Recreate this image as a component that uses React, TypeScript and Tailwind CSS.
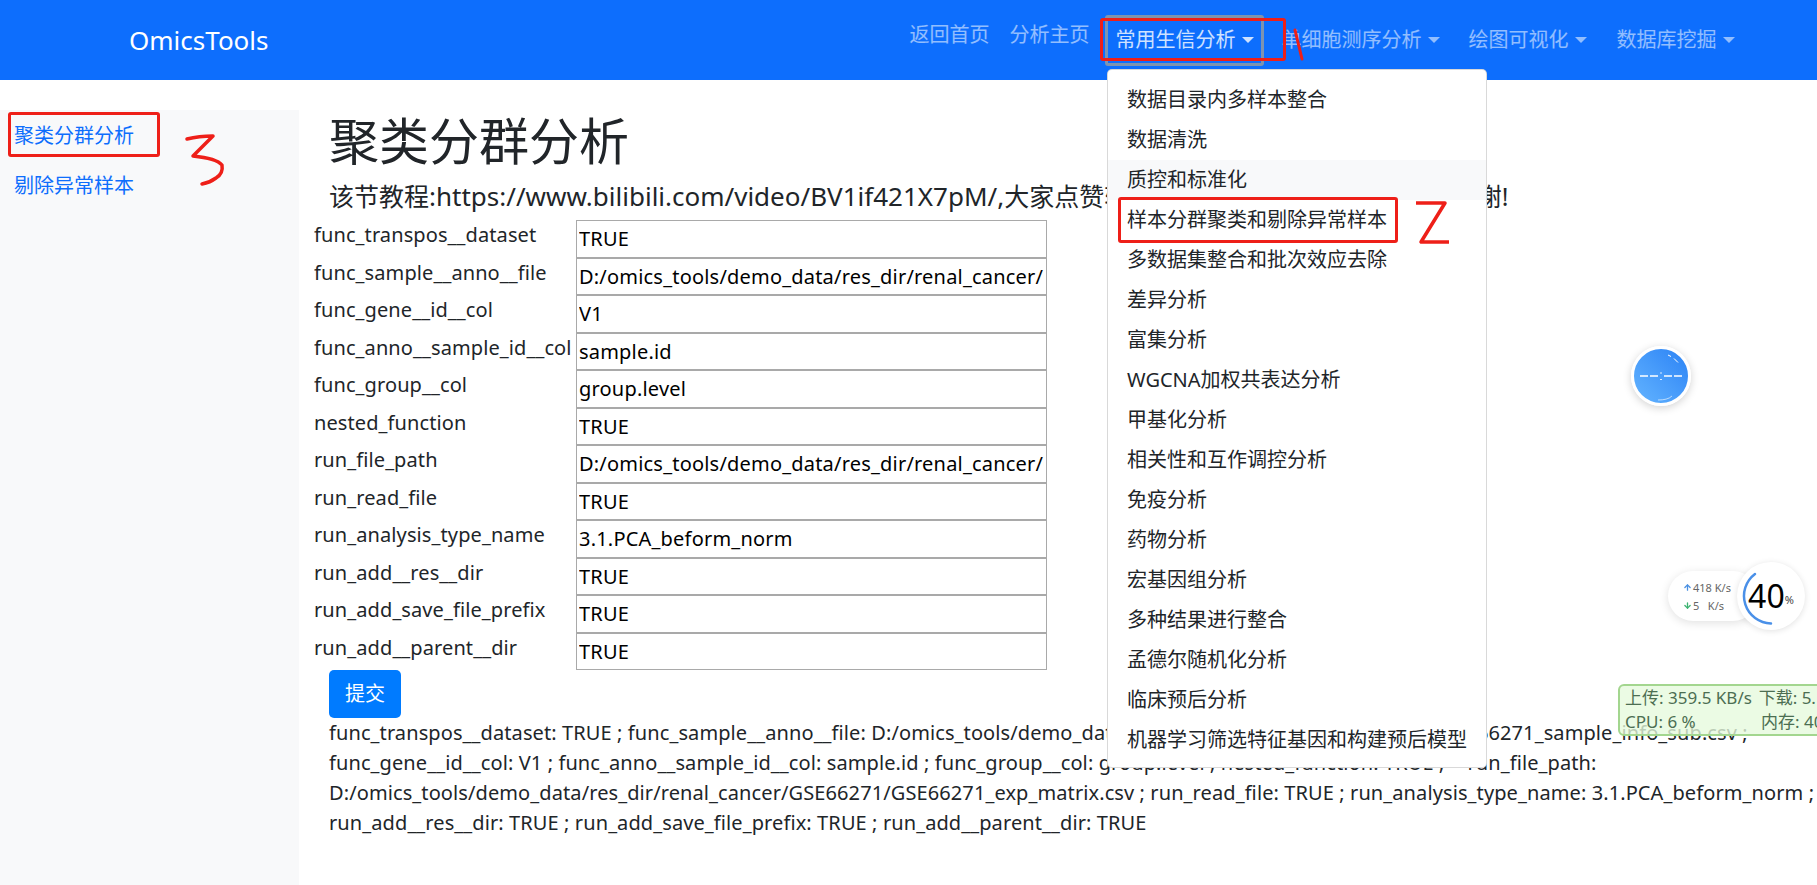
import { ArrowDown, ArrowUp } from 'lucide-react';

const FIELDS = [
  ['func_transpos__dataset', 'TRUE'],
  ['func_sample__anno__file', 'D:/omics_tools/demo_data/res_dir/renal_cancer/GSE66271/GSE66271_sample_info_sub.csv'],
  ['func_gene__id__col', 'V1'],
  ['func_anno__sample_id__col', 'sample.id'],
  ['func_group__col', 'group.level'],
  ['nested_function', 'TRUE'],
  ['run_file_path', 'D:/omics_tools/demo_data/res_dir/renal_cancer/GSE66271/GSE66271_exp_matrix.csv'],
  ['run_read_file', 'TRUE'],
  ['run_analysis_type_name', '3.1.PCA_beform_norm'],
  ['run_add__res__dir', 'TRUE'],
  ['run_add_save_file_prefix', 'TRUE'],
  ['run_add__parent__dir', 'TRUE'],
];

const MENU_ITEMS = [
  '数据目录内多样本整合',
  '数据清洗',
  '质控和标准化',
  '样本分群聚类和剔除异常样本',
  '多数据集整合和批次效应去除',
  '差异分析',
  '富集分析',
  'WGCNA加权共表达分析',
  '甲基化分析',
  '相关性和互作调控分析',
  '免疫分析',
  '药物分析',
  '宏基因组分析',
  '多种结果进行整合',
  '孟德尔随机化分析',
  '临床预后分析',
  '机器学习筛选特征基因和构建预后模型',
];

function Caret() {
  return <span className="ml-[6px] h-0 w-0 border-x-[6px] border-t-[6px] border-x-transparent border-t-current" />;
}

function SpeedDial() {
  return (
    <div className="absolute left-[1631px] top-[346px] h-[60px] w-[60px] rounded-full border-[3px] border-white bg-gradient-to-tr from-[#63b4ff] to-[#2b82f5] shadow-[0_2px_8px_rgba(0,0,0,0.18)]">
      <svg width="54" height="54" viewBox="0 0 54 54" fill="none" stroke="white">
        <path d="M6 27h8M16 27h8M30 27h8M40 27h8" strokeWidth="1.6" />
        <path d="M27 23.5v1M27 30v1" strokeWidth="1.6" />
        <path d="M34 6l3 1.5M40 9.5l4 4" strokeWidth="1" />
        <path d="M24 51c6 0 11-1 14-4" strokeWidth="1" opacity="0.6" />
      </svg>
    </div>
  );
}

function NetWidget() {
  return (
    <div className="absolute left-[1668px] top-[562px] h-[68px] w-[137px]">
      <div className="absolute left-0 top-[9px] flex h-[50px] w-[90px] flex-col justify-center gap-[3px] rounded-full bg-white pl-[15px] text-[11px] leading-[15px] text-[#666] shadow-[0_2px_10px_rgba(0,0,0,0.12)]">
        <div className="flex items-center gap-[1px] whitespace-pre">
          <ArrowUp size={9} strokeWidth={3.5} className="text-[#4a90e2]" />
          418 K/s
        </div>
        <div className="flex items-center gap-[1px] whitespace-pre">
          <ArrowDown size={9} strokeWidth={3.5} className="text-[#3cb371]" />
          5   K/s
        </div>
      </div>
      <div className="absolute left-[69px] top-0 flex h-[68px] w-[68px] items-center justify-center rounded-full bg-white text-black shadow-[0_1px_6px_rgba(0,0,0,0.12)]">
        <svg className="absolute left-0 top-0" width="68" height="68" viewBox="0 0 68 68" fill="none">
          <path d="M18 12A27.5 27.5 0 0 0 34 61.5" stroke="#4a90e8" strokeWidth="2.5" strokeLinecap="round" />
        </svg>
        <span className="text-[32px] leading-none">40</span>
        <span className="mt-[8px] text-[11px] text-[#444]">%</span>
      </div>
    </div>
  );
}

function TrafficBox() {
  return (
    <div className="absolute left-[1618px] top-[684px] h-[52px] w-[260px] rounded-[6px] border-2 border-[#a3d68f] bg-[#e6fadcc8] px-[5px] text-[17px] leading-[24px] text-[#4c6e52] whitespace-pre">
      <div className="flex">
        <span className="w-[136px]">上传: 359.5 KB/s</span>
        <span>下载: 5.1 MB/s</span>
      </div>
      <div className="flex">
        <span className="w-[136px]">CPU: 6 %</span>
        <span>内存: 40 %</span>
      </div>
    </div>
  );
}

function Scribbles() {
  return (
    <>
      <div className="absolute left-[1100px] top-[18px] h-[43px] w-[186px] rounded-[3px] border-[3px] border-[#ee1f18]" />
      <svg className="absolute left-[1290px] top-[26px]" width="18" height="36" fill="none" stroke="#ee1f18" strokeWidth="3" strokeLinecap="round">
        <path d="M5 4l7 29" />
      </svg>
      <div className="absolute left-[1118px] top-[197px] h-[46px] w-[280px] rounded-[3px] border-[3px] border-[#ee1f18]" />
      <svg className="absolute left-[1412px] top-[198px]" width="40" height="50" fill="none" stroke="#ee1f18" strokeWidth="3.5" strokeLinejoin="round">
        <path d="M4 5h29L9 44h28" />
      </svg>
      <div className="absolute left-[8px] top-[112px] h-[45px] w-[152px] rounded-[3px] border-[3px] border-[#ee1f18]" />
      <svg className="absolute left-[184px] top-[132px]" width="44" height="56" fill="none" stroke="#ee1f18" strokeWidth="3.5" strokeLinecap="round" strokeLinejoin="round">
        <path d="M3 7c8-2 17-3 26-3L9 24c10 1 24 3 29 9 1 6-1 10-6 13-4 3-9 5-14 6" />
      </svg>
    </>
  );
}

export default function App() {
  return (
    <div className="relative h-[885px] w-full overflow-hidden bg-white font-['Noto_Sans','Noto_Sans_CJK_SC',sans-serif] text-[20px] text-[#212529]">
      {/* Navbar */}
      <nav className="flex h-20 items-center bg-[#0d6efd]">
        <a className="ml-[129px] text-[26px] text-white">OmicsTools</a>
        <div className="ml-[641px] flex items-center text-white/55">
          <a className="-mt-[10px] w-[80px] whitespace-nowrap">返回首页</a>
          <a className="-mt-[10px] ml-[20px] w-[80px] whitespace-nowrap">分析主页</a>
          <a className="ml-[15px] flex h-[51px] w-[159px] items-center rounded-[3px] border-[3px] border-[#7d94b0] pl-[8px] text-white/80">
            常用生信分析
            <Caret />
          </a>
          <a className="ml-[18px] flex items-center">
            单细胞测序分析
            <Caret />
          </a>
          <a className="ml-[29px] flex items-center">
            绘图可视化
            <Caret />
          </a>
          <a className="ml-[30px] flex items-center">
            数据库挖掘
            <Caret />
          </a>
        </div>
      </nav>

      <div className="flex pt-[30px]">
        {/* Sidebar */}
        <aside className="flex h-[775px] w-[299px] shrink-0 flex-col gap-[20px] bg-[#f8f9fa] pl-[14px] pt-[11px] text-[#0d6efd]">
          <a className="leading-[30px]">聚类分群分析</a>
          <a className="leading-[30px]">剔除异常样本</a>
        </aside>

        {/* Main */}
        <main className="min-w-0 flex-1 pl-[15px]">
          <div className="pl-[15px]">
            <h1 className="h-[62px] text-[50px] leading-[62px]">聚类分群分析</h1>
            <h4 className="h-[48px] whitespace-nowrap text-[25px] leading-[48px]">
              该节教程<span className="text-[26px]">:https://www.bilibili.com/video/BV1if421X7pM/,</span>大家点赞转发支持一下,
              <span className="ml-[191px]">谢谢!</span>
            </h4>
          </div>

          <div className="flex w-[733px] flex-col">
            {FIELDS.map(([label, value]) => (
              <div key={label} className="flex h-[37.5px]">
                <label className="w-[262px] shrink-0 overflow-hidden whitespace-nowrap leading-[30px] tracking-[0.1px]">{label}</label>
                <input
                  readOnly
                  value={value}
                  className="h-[37.5px] w-[471px] border border-[#a9a9a9] bg-white px-[2px] tracking-[0.2px] text-black outline-none"
                />
              </div>
            ))}
          </div>

          <div className="pl-[15px]">
            <button className="h-[48px] w-[72px] rounded-[5px] bg-[#007bff] text-white">提交</button>
            <div className="whitespace-nowrap leading-[30px] tracking-[0.1px]">
              <div>
                func_transpos__dataset: TRUE ; func_sample__anno__file: D:/omics_tools/demo_data/res_dir/renal_cancer/GSE66271/
                <span className="ml-[7px]">GSE66271_sample_info_sub.csv ;</span>
              </div>
              <div>
                func_gene__id__col: V1 ; func_anno__sample_id__col: sample.id ; func_group__col: group.level ; nested_function: TRUE ;
                <span className="ml-[23px]">run_file_path:</span>
              </div>
              <div>D:/omics_tools/demo_data/res_dir/renal_cancer/GSE66271/GSE66271_exp_matrix.csv ; run_read_file: TRUE ; run_analysis_type_name: 3.1.PCA_beform_norm ;</div>
              <div>run_add__res__dir: TRUE ; run_add_save_file_prefix: TRUE ; run_add__parent__dir: TRUE</div>
            </div>
          </div>
        </main>
      </div>

      {/* Open dropdown */}
      <div className="absolute left-[1107px] top-[69px] h-[699px] w-[380px] rounded-[5px] border border-black/15 bg-white py-[10px] text-[#212529]">
        {MENU_ITEMS.map((item) => (
          <a
            key={item}
            className={`block h-[40px] whitespace-nowrap pl-[19px] leading-[40px] ${item === '质控和标准化' ? 'bg-[#f8f9fa]' : ''}`}
          >
            {item}
          </a>
        ))}
      </div>

      <Scribbles />
      <SpeedDial />
      <NetWidget />
      <TrafficBox />
    </div>
  );
}
